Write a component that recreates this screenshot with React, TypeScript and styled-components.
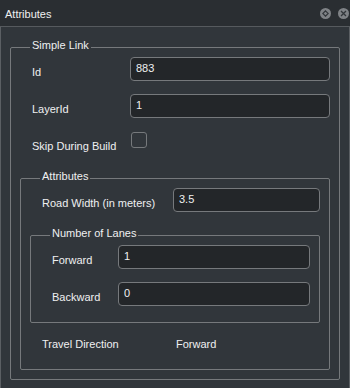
import React from "react";
import styled, { createGlobalStyle } from "styled-components";

const GlobalStyle = createGlobalStyle`
  html, body {
    margin: 0;
    padding: 0;
    background: #31363b;
  }
  * {
    box-sizing: border-box;
  }
`;

const Dock = styled.div`
  width: 350px;
  height: 388px;
  display: flex;
  flex-direction: column;
  background: #31363b;
  color: #eff0f1;
  font-family: "Liberation Sans", Arial, sans-serif;
  font-size: 11px;
  line-height: 13px;
  overflow: hidden;
`;

const TitleBar = styled.div`
  height: 27px;
  flex: none;
  display: flex;
  align-items: center;
  justify-content: space-between;
  padding: 0 5px 0 5px;
  background: #2a2e32;
  border-bottom: 1px solid #565a5e;
`;

const TitleText = styled.span`
  font-size: 11px;
  padding-top: 2px;
`;

const TitleButtons = styled.div`
  display: flex;
  gap: 7px;
  margin-right: -4px;
  padding-top: 1px;
`;

const RoundButton = styled.span`
  width: 11px;
  height: 11px;
  border-radius: 50%;
  background: #7f8286;
  display: flex;
  align-items: center;
  justify-content: center;
`;

const Body = styled.div`
  flex: 1;
  border-left: 1px solid #5b5f63;
  border-right: 1px solid #5b5f63;
  padding: 12px 9px 0 9px;
`;

const Group = styled.fieldset<{ $bottom?: number }>`
  margin: 0;
  min-width: 0;
  border: 1px solid #76797c;
  border-radius: 2px;
  padding: 1px 9px ${(p) => p.$bottom ?? 9}px 9px;
  display: flex;
  flex-direction: column;
`;

const Legend = styled.legend`
  margin-left: 10px;
  padding: 0 2px 4px 2px;
  font-size: 11px;
  line-height: 13px;
  color: #eff0f1;
`;

const Row = styled.div<{ $label: number }>`
  display: grid;
  grid-template-columns: ${(p) => p.$label}px 1fr;
  min-height: 24px;
  padding-left: 12px;
  & + & {
    margin-top: 13px;
  }
`;

const Label = styled.span`
  padding-top: 9px;
  white-space: nowrap;
`;

const TextInput = styled.input`
  height: 24px;
  width: 100%;
  background: #232629;
  border: 1px solid #76797c;
  border-radius: 4px;
  color: #eff0f1;
  font-family: "Liberation Sans", Arial, sans-serif;
  font-size: 11px;
  padding: 0 0 2px 5px;
  outline: none;
`;

const CheckBox = styled.span`
  width: 16px;
  height: 16px;
  margin: 1px 0 0 1px;
  border: 1px solid #76797c;
  border-radius: 3px;
`;

const NestedGroup = styled(Group)`
  margin-top: 15px;
`;

const InfoRow = styled.div`
  display: grid;
  grid-template-columns: 134px 1fr;
  padding-left: 12px;
  margin-top: 15px;
`;

const FloatIcon = () => (
  <svg width="7" height="7" viewBox="0 0 7 7">
    <path d="M3.5 0.8 L6.2 3.5 L3.5 6.2 L0.8 3.5 Z" fill="none" stroke="#33373b" strokeWidth="1.2" />
  </svg>
);

const CloseIcon = () => (
  <svg width="7" height="7" viewBox="0 0 7 7">
    <path d="M1 1 L6 6 M6 1 L1 6" stroke="#33373b" strokeWidth="1.3" />
  </svg>
);

export default function App() {
  return (
    <>
      <GlobalStyle />
      <Dock>
        <TitleBar>
          <TitleText>Attributes</TitleText>
          <TitleButtons>
            <RoundButton>
              <FloatIcon />
            </RoundButton>
            <RoundButton>
              <CloseIcon />
            </RoundButton>
          </TitleButtons>
        </TitleBar>

        <Body>
          <Group>
            <Legend>Simple Link</Legend>
            <Row $label={98}>
              <Label>Id</Label>
              <TextInput defaultValue="883" />
            </Row>
            <Row $label={98}>
              <Label>LayerId</Label>
              <TextInput defaultValue="1" />
            </Row>
            <Row $label={98}>
              <Label>Skip During Build</Label>
              <CheckBox />
            </Row>

            <NestedGroup $bottom={18}>
              <Legend>Attributes</Legend>
              <Row $label={131}>
                <Label>Road Width (in meters)</Label>
                <TextInput defaultValue="3.5" />
              </Row>

              <NestedGroup $bottom={16}>
                <Legend>Number of Lanes</Legend>
                <Row $label={66}>
                  <Label>Forward</Label>
                  <TextInput defaultValue="1" />
                </Row>
                <Row $label={66}>
                  <Label>Backward</Label>
                  <TextInput defaultValue="0" />
                </Row>
              </NestedGroup>

              <InfoRow>
                <span>Travel Direction</span>
                <span>Forward</span>
              </InfoRow>
            </NestedGroup>
          </Group>
        </Body>
      </Dock>
    </>
  );
}
